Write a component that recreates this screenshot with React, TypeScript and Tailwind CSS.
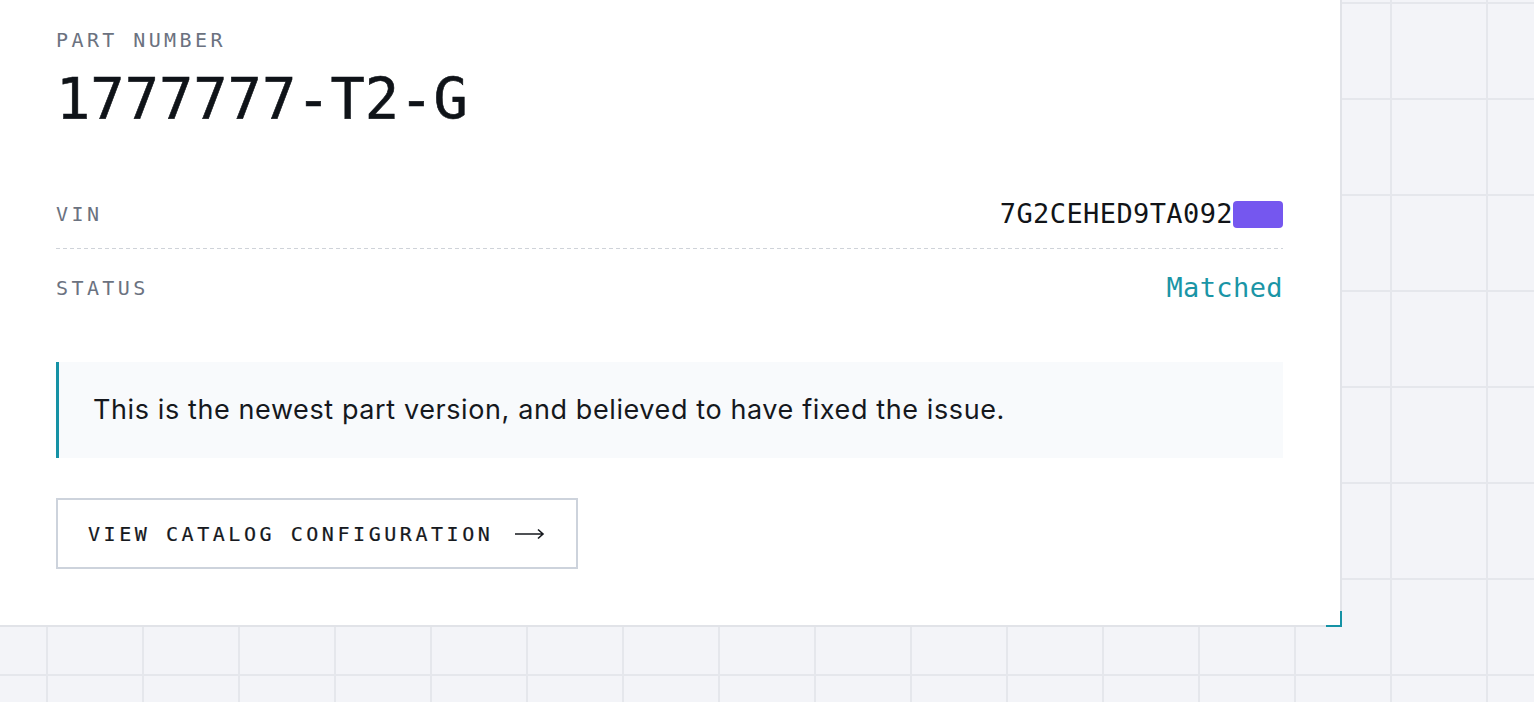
const mono = "font-['DejaVu_Sans_Mono','Liberation_Mono',monospace]"

function Row({ label, children, h }: { label: string; children: React.ReactNode; h: string }) {
  return (
    <div className={`flex items-center justify-between ${h}`}>
      <span className={`${mono} text-[20px] leading-7 tracking-[3.4px] text-[#6b7280]`}>{label}</span>
      {children}
    </div>
  )
}

export default function App() {
  return (
    <div className="relative h-[702px] w-full overflow-hidden bg-[#f3f4f8] bg-[linear-gradient(to_right,#e5e7ec_2px,transparent_2px),linear-gradient(to_bottom,#e5e7ec_2px,transparent_2px)] bg-[size:96px_96px] bg-[position:46px_2px]">
      {/* Card */}
      <div className="relative w-[1342px] border-r-2 border-b-2 border-[#e1e3e8] bg-white pl-14 pr-[57px] pt-[26px] pb-[56px]">
        <p className={`${mono} text-[20px] leading-7 tracking-[3.4px] text-[#6b7280]`}>PART NUMBER</p>
        <h1 className={`${mono} mt-[17px] text-[57px] leading-none text-[#0f1318] [-webkit-text-stroke:0.6px_#0f1318]`}>1777777-T2-G</h1>

        <div className="mt-[52px]">
          <Row label="VIN" h="h-[68px]">
            <span className="flex items-center">
              <span className={`${mono} text-[27px] leading-8 tracking-[0.4px] text-[#111418]`}>7G2CEHED9TA092</span>
              <span className="inline-block h-[27px] w-[50px] rounded-[4px] bg-[#7557ef]" />
            </span>
          </Row>
          <div className="h-px bg-[linear-gradient(to_right,#cfd3d9_4px,transparent_4px)] bg-[size:7px_1px]" />
          <Row label="STATUS" h="h-[78px]">
            <span className={`${mono} text-[27px] leading-8 tracking-[0.4px] text-[#1a95a6]`}>Matched</span>
          </Row>
        </div>

        {/* Callout */}
        <div className="mt-[35px] flex h-[96px] items-center border-l-[3px] border-[#1592a5] bg-[#f8fafc] pl-[34px]">
          <p className="font-['Inter',sans-serif] text-[27px] tracking-[0.6px] text-[#15181d]">
            This is the newest part version, and believed to have fixed the issue.
          </p>
        </div>

        <button className="mt-[40px] flex h-[71px] items-center gap-[22px] border-2 border-[#cdd3dc] bg-white pl-[30px] pr-[31px]">
          <span className={`${mono} text-[20px] tracking-[3.55px] text-[#16191e] [-webkit-text-stroke:0.2px_#16191e]`}>
            VIEW CATALOG CONFIGURATION
          </span>
          <svg width="30" height="12" viewBox="0 0 30 12" fill="none" stroke="#16191e" strokeWidth="1.6">
            <path d="M0 6h28M23 1.5l5 4.5-5 4.5" />
          </svg>
        </button>

        {/* corner accent */}
        <div className="absolute -right-[2px] -bottom-[2px] h-4 w-4 border-r-2 border-b-2 border-[#1592a5]" />
      </div>
    </div>
  )
}
